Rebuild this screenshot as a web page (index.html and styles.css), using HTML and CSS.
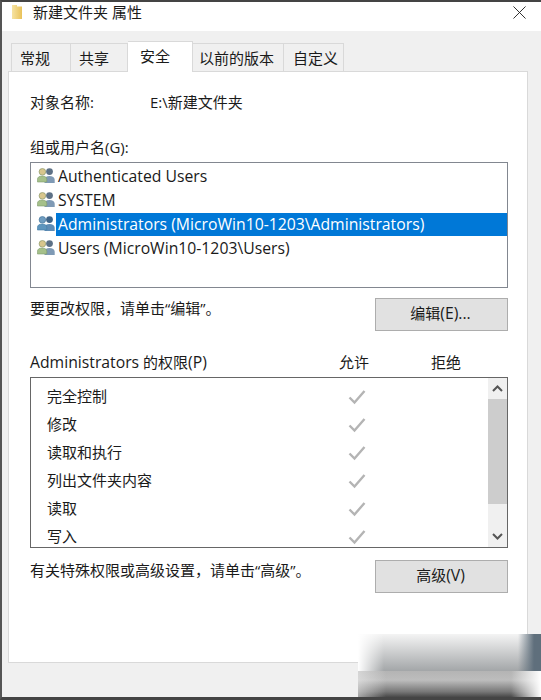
FILE: index.html
```html
<!DOCTYPE html>
<html lang="zh-CN">
<head>
<meta charset="utf-8">
<title>新建文件夹 属性</title>
<link rel="stylesheet" href="styles.css">
</head>
<body>
<svg class="defs" width="0" height="0" aria-hidden="true">
  <defs>
    <linearGradient id="folder-fill" x1="0" y1="0" x2="1" y2="0">
      <stop offset="0" stop-color="#f6e3a2"/>
      <stop offset="1" stop-color="#e9c25a"/>
    </linearGradient>
    <symbol id="users" viewBox="0 0 18 18">
      <circle cx="12.500" cy="4.600" r="3.400" fill="#5d7186"/>
      <path d="M7.500 16v-3.200c0-2.400 2-3.800 5-3.800s5.200 1.400 5.200 3.800V16z" fill="#7f9ab5"/>
      <circle cx="5.400" cy="4.800" r="3.300" fill="#d8c68d" stroke="#8b9a6b" stroke-width=".7"/>
      <path d="M.4 15v-2.600c0-2.200 2-3.400 4.800-3.400s4.600 1.200 4.600 3.400V15z" fill="#a5c08a" stroke="#7d9a6c" stroke-width=".6"/>
    </symbol>
    <symbol id="users-sel" viewBox="0 0 18 18">
      <circle cx="12.500" cy="4.600" r="3.400" fill="#3f6488"/>
      <path d="M7.500 16v-3.200c0-2.400 2-3.800 5-3.800s5.200 1.400 5.200 3.800V16z" fill="#5f8cb5"/>
      <circle cx="5.400" cy="4.800" r="3.300" fill="#6e9cc0" stroke="#47779c" stroke-width=".7"/>
      <path d="M.4 15v-2.600c0-2.200 2-3.400 4.800-3.400s4.600 1.200 4.600 3.400V15z" fill="#5e95bd" stroke="#3f7aa5" stroke-width=".6"/>
    </symbol>
    <symbol id="check" viewBox="0 0 18 16">
      <path d="M1.500 8.500 6.500 13.500 16.500 2" fill="none" stroke="#b4b4b4" stroke-width="2.400"/>
    </symbol>
  </defs>
</svg>
<div class="window">
  <header class="titlebar">
    <svg class="folder" viewBox="0 0 12 16" aria-hidden="true">
      <path d="M1 1h5v1.500h5V15H1z" fill="url(#folder-fill)"/>
    </svg>
    <span class="title">新建文件夹 属性</span>
    <svg class="close" viewBox="0 0 14 14" aria-hidden="true">
      <path d="M.5.500 13.500 13.500M13.500.500.500 13.500" stroke="#222" stroke-width="1" fill="none"/>
    </svg>
  </header>
  <nav class="tabs">
    <div class="tab tab-a">常规</div>
    <div class="tab tab-b">共享</div>
    <div class="tab tab-active">安全</div>
    <div class="tab tab-c">以前的版本</div>
    <div class="tab tab-d">自定义</div>
  </nav>
  <main class="panel">
    <div class="object-row"><span class="object-label">对象名称:</span><span>E:\新建文件夹</span></div>
    <div class="group-label">组或用户名(G):</div>
    <ul class="users">
      <li class="user"><svg class="user-icon"><use href="#users"/></svg><span class="user-name latin">Authenticated Users</span></li>
      <li class="user"><svg class="user-icon"><use href="#users"/></svg><span class="user-name latin">SYSTEM</span></li>
      <li class="user"><svg class="user-icon"><use href="#users-sel"/></svg><span class="user-name latin selected">Administrators (MicroWin10-1203\Administrators)</span></li>
      <li class="user"><svg class="user-icon"><use href="#users"/></svg><span class="user-name latin">Users (MicroWin10-1203\Users)</span></li>
    </ul>
    <div class="action-row edit-row">
      <span class="action-text">要更改权限，请单击“编辑”。</span>
      <button class="btn" type="button">编辑<span class="latin">(E)...</span></button>
    </div>
    <div class="perm-head">
      <span class="perm-title"><span class="latin">Administrators</span> 的权限<span class="latin">(P)</span></span>
      <span class="perm-allow">允许</span>
      <span class="perm-deny">拒绝</span>
    </div>
    <div class="perms">
      <ul class="perm-rows">
        <li class="perm"><span>完全控制</span><svg class="check"><use href="#check"/></svg></li>
        <li class="perm"><span>修改</span><svg class="check"><use href="#check"/></svg></li>
        <li class="perm"><span>读取和执行</span><svg class="check"><use href="#check"/></svg></li>
        <li class="perm"><span>列出文件夹内容</span><svg class="check"><use href="#check"/></svg></li>
        <li class="perm"><span>读取</span><svg class="check"><use href="#check"/></svg></li>
        <li class="perm"><span>写入</span><svg class="check"><use href="#check"/></svg></li>
      </ul>
      <div class="scrollbar">
        <svg class="arrow" viewBox="0 0 19 21" aria-hidden="true"><path d="M5 13 9.500 8.500 14 13" fill="none" stroke="#555" stroke-width="2"/></svg>
        <div class="thumb"></div>
        <svg class="arrow arrow-down" viewBox="0 0 19 21" aria-hidden="true"><path d="M5 8 9.500 12.500 14 8" fill="none" stroke="#555" stroke-width="2"/></svg>
      </div>
    </div>
    <div class="action-row adv-row">
      <span class="action-text">有关特殊权限或高级设置，请单击“高级”。</span>
      <button class="btn" type="button">高级<span class="latin">(V)</span></button>
    </div>
  </main>
  <div class="watermark" aria-hidden="true">
    <div class="wm-top"></div>
    <div class="wm-bottom"></div>
  </div>
</div>
</body>
</html>
```

FILE: styles.css
```css
* { box-sizing: border-box; }
html, body { margin: 0; padding: 0; }
body {
  width: 541px;
  height: 700px;
  overflow: hidden;
  background: #f0f0f0;
  color: #1a1a1a;
  font: 15px/20px "Open Sans", "Noto Sans CJK SC", sans-serif;
}
.defs { position: absolute; }
ul { list-style: none; margin: 0; padding: 0; }
.latin { font-size: 15.75px; }
.window {
  position: relative;
  width: 541px;
  height: 700px;
  border-top: 2px solid #444;
  border-left: 2px solid #555;
  border-bottom: 3px solid #444;
  background: #f0f0f0;
  overflow: hidden;
}
.titlebar {
  height: 29px;
  background: #fff;
  display: flex;
  align-items: center;
  padding: 0 15px 9px 9px;
}
.folder { width: 12px; height: 16px; flex: none; }
.title { margin-left: 10px; flex: 1; }
.close { width: 13px; height: 13px; flex: none; }
.tabs {
  display: flex;
  align-items: flex-end;
  height: 40px;
  padding-left: 9px;
}
.tab {
  height: 28px;
  background: #f0f0f0;
  border: 1px solid #d9d9d9;
  border-bottom: 0;
  border-left: 0;
  line-height: 29px;
}
.tab-a { width: 60px; border-left: 1px solid #d9d9d9; padding-left: 8px; }
.tab-b { width: 57px; padding-left: 8px; }
.tab-c { width: 91px; padding-left: 6px; }
.tab-d { width: 60px; padding-left: 9px; }
.tab-active {
  width: 65px;
  height: 31px;
  margin-bottom: -1px;
  background: #fff;
  line-height: 29px;
  padding-left: 12px;
  position: relative;
  z-index: 1;
}
.panel {
  width: 520px;
  height: 592px;
  margin-left: 6px;
  background: #fff;
  border: 1px solid #d9d9d9;
  padding: 0 19px 0 21px;
}
.object-row { display: flex; margin-top: 20px; height: 20px; }
.object-label { width: 120px; }
.group-label { margin-top: 25px; }
.users {
  height: 126px;
  margin-top: 5px;
  border: 1px solid #828790;
  padding-top: 1px;
}
.user { display: flex; align-items: center; height: 24px; padding-left: 6px; }
.user-icon { width: 18px; height: 18px; flex: none; }
.user-name { padding: 0 1px; line-height: 23px; height: 23px; margin-left: 2px; }
.selected { background: #0078d7; color: #fff; flex: 1; margin-left: 1px; padding-left: 2px; }
.action-row {
  display: flex;
  justify-content: space-between;
  align-items: flex-start;
}
.edit-row { margin-top: 10px; }
.adv-row { margin-top: 12px; }
.btn {
  width: 133px;
  height: 33px;
  background: #e1e1e1;
  border: 1px solid #adadad;
  color: #1a1a1a;
  font: inherit;
  padding: 0 2px 3px 0;
}
.perm-head { position: relative; display: flex; margin-top: 21px; height: 20px; }
.perm-title { width: 309px; }
.perm-allow { width: 92px; }
.perms {
  display: flex;
  height: 171px;
  margin-top: 5px;
  border: 1px solid #666;
  overflow: hidden;
}
.perm-rows { flex: 1; padding-top: 4px; }
.perm {
  display: flex;
  justify-content: space-between;
  align-items: center;
  height: 28px;
  padding: 0 122px 0 16px;
}
.check { width: 18px; height: 16px; flex: none; margin-top: 1px; }
.scrollbar {
  width: 19px;
  display: flex;
  flex-direction: column;
  background: #f0f0f0;
}
.arrow { width: 19px; height: 21px; flex: none; }
.thumb { height: 105px; background: #cdcdcd; }
.arrow-down { margin-top: auto; }
.watermark {
  position: absolute;
  left: 356px;
  top: 632px;
  width: 183px;
  height: 63px;
  display: flex;
  flex-direction: column;
}
.wm-top {
  height: 37px;
  background:
    linear-gradient(to right, #fff 0, rgba(255,255,255,0) 26px),
    linear-gradient(to right, rgba(90,108,122,0) 160px, #5f6f7c 176px),
    linear-gradient(to bottom, #f4f4f4 0, #a3a6a8 100%);
}
.wm-bottom {
  height: 26px;
  background:
    linear-gradient(to right, rgba(240,240,240,.55) 0, rgba(255,255,255,0) 28px),
    linear-gradient(to left, #fff 0, rgba(255,255,255,0) 30px),
    linear-gradient(to bottom, #b4b4b4 0, #bdbdbd 35%, #777 80%, #484848 100%);
}
```
